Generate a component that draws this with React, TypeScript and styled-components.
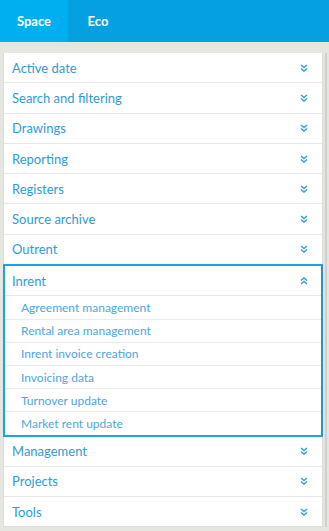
import React from "react";
import styled, { createGlobalStyle } from "styled-components";

const Global = createGlobalStyle`
  html, body { margin: 0; padding: 0; }
  body {
    background: #e6e6e1;
    font-family: Lato, "Noto Sans", sans-serif;
    width: 329px;
    height: 531px;
    overflow: hidden;
  }
`;

const Header = styled.div`
  display: flex;
  height: 42px;
  background: #04a0df;
`;

const Tab = styled.div<{ $active?: boolean }>`
  display: flex;
  align-items: center;
  justify-content: center;
  width: ${(p) => (p.$active ? "68px" : "48px")};
  padding-left: ${(p) => (p.$active ? "0" : "6px")};
  background: ${(p) => (p.$active ? "#00aff0" : "transparent")};
  color: #fff;
  font-size: 13px;
  font-weight: 700;
`;

const Body = styled.div`
  display: flex;
  padding: 11px 2px 4px 3px;
  gap: 2px;
`;

const Panel = styled.div`
  flex: 1;
  background: #fff;
  border: 1px solid #dcdcd8;
  border-top: 0;
  display: flex;
  flex-direction: column;
`;

const Scroll = styled.div`
  width: 2px;
  align-self: stretch;
  background: #cfcfca;
`;

const Row = styled.div<{ $last?: boolean }>`
  display: flex;
  align-items: center;
  justify-content: space-between;
  height: 29.3px;
  padding: 0 14px 0 8px;
  border-bottom: ${(p) => (p.$last ? "0" : "1px solid #e8e8e6")};
  color: #2f9bd6;
  font-size: 13px;
`;

const OpenBox = styled.div`
  border: 2px solid #18a6e0;
  border-right-color: #2d8fc7;
  margin: -1px -1px 0 -1px;
  display: flex;
  flex-direction: column;
`;

const OpenHead = styled(Row)`
  padding: 0 13px 0 7px;
`;

const Sub = styled.div<{ $last?: boolean }>`
  display: flex;
  align-items: center;
  height: 22.2px;
  padding-left: 16px;
  border-bottom: ${(p) => (p.$last ? "0" : "1px solid #ebebea")};
  color: #4ea6dd;
  font-size: 12px;
`;

const Chevron = ({ up }: { up?: boolean }) => (
  <svg width="8" height="8" viewBox="0 0 8 8" style={{ transform: up ? "rotate(180deg)" : undefined }}>
    <path d="M1 1 L4 3.5 L7 1" fill="none" stroke="#3a9fdb" strokeWidth="1.6" />
    <path d="M1 4.5 L4 7 L7 4.5" fill="none" stroke="#3a9fdb" strokeWidth="1.6" />
  </svg>
);

const before = ["Active date", "Search and filtering", "Drawings", "Reporting", "Registers", "Source archive", "Outrent"];
const subs = ["Agreement management", "Rental area management", "Inrent invoice creation", "Invoicing data", "Turnover update", "Market rent update"];
const after = ["Management", "Projects", "Tools"];

export default function App() {
  return (
    <>
      <Global />
      <Header>
        <Tab $active>Space</Tab>
        <Tab>Eco</Tab>
      </Header>
      <Body>
        <Panel>
          {before.map((t) => (
            <Row key={t}>
              {t}
              <Chevron />
            </Row>
          ))}
          <OpenBox>
            <OpenHead>
              Inrent
              <Chevron up />
            </OpenHead>
            {subs.map((s, i) => (
              <Sub key={s} $last={i === subs.length - 1}>{s}</Sub>
            ))}
          </OpenBox>
          {after.map((t, i) => (
            <Row key={t} $last={i === after.length - 1}>
              {t}
              <Chevron />
            </Row>
          ))}
        </Panel>
        <Scroll />
      </Body>
    </>
  );
}
